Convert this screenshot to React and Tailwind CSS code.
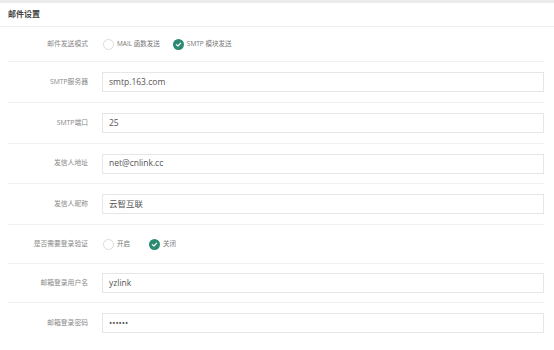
import React from 'react';

const fields = [
  { label: 'SMTP服务器', value: 'smtp.163.com', h: 'h-[41px]' },
  { label: 'SMTP端口', value: '25', h: 'h-[41px]' },
  { label: '发信人地址', value: 'net@cnlink.cc', h: 'h-[40px]' },
  { label: '发信人昵称', value: '云智互联', h: 'h-[41px]' },
];

const Radio = ({ checked, children }) => (
  <label className="flex items-center gap-[3px] text-[6.5px] text-[#777]">
    {checked ? (
      <span className="w-[11px] h-[11px] rounded-full bg-[#2a8a72] flex items-center justify-center">
        <svg width="7" height="7" viewBox="0 0 10 10">
          <path d="M2 5.2 L4.2 7.3 L8 3" stroke="#fff" strokeWidth="1.8" fill="none" strokeLinecap="round" strokeLinejoin="round" />
        </svg>
      </span>
    ) : (
      <span className="w-[11px] h-[11px] rounded-full border border-[#dcdcdc] bg-white" />
    )}
    <span>{children}</span>
  </label>
);

const Row = ({ label, children, last, h }) => (
  <div
    className={`mx-[8px] mr-[10px] flex items-center ${h} ${last ? '' : 'border-b border-[#f1f1f1]'}`}
  >
    <div className="w-[80px] text-right text-[6.8px] text-[#888]">{label}</div>
    <div className="flex-1 ml-[14px] flex items-center">{children}</div>
  </div>
);

const Input = ({ value }) => (
  <div className="w-full h-[20px] border border-[#e6e6e6] flex items-center pl-[6px] text-[8.5px] text-[#555]">
    {value}
  </div>
);

const App = () => {
  return (
    <div className="w-[554px] h-[350px] bg-white overflow-hidden" style={{ fontFamily: '"Open Sans", "Noto Sans CJK SC", sans-serif' }}>
      <div className="h-[3px] bg-[#ececec]" />
      <div className="h-[24px] flex items-center px-[8px] pb-[1px] border-b border-[#efefef] text-[8px] font-bold text-[#444]">
        邮件设置
      </div>
      <Row label="邮件发送模式" h="h-[35px]">
        <div className="flex items-center gap-[13px] pl-[1px]">
          <Radio>MAIL 函数发送</Radio>
          <Radio checked>SMTP 模块发送</Radio>
        </div>
      </Row>
      {fields.map(f => (
        <Row key={f.label} label={f.label} h={f.h}>
          <Input value={f.value} />
        </Row>
      ))}
      <Row label="是否需要登录验证" h="h-[39px]">
        <div className="flex items-center gap-[19px] pl-[1px]">
          <Radio>开启</Radio>
          <Radio checked>关闭</Radio>
        </div>
      </Row>
      <Row label="邮箱登录用户名" h="h-[39px]">
        <Input value="yzlink" />
      </Row>
      <Row label="邮箱登录密码" h="h-[40px]" last>
        <Input value="••••••" />
      </Row>
    </div>
  );
};

export default App;
